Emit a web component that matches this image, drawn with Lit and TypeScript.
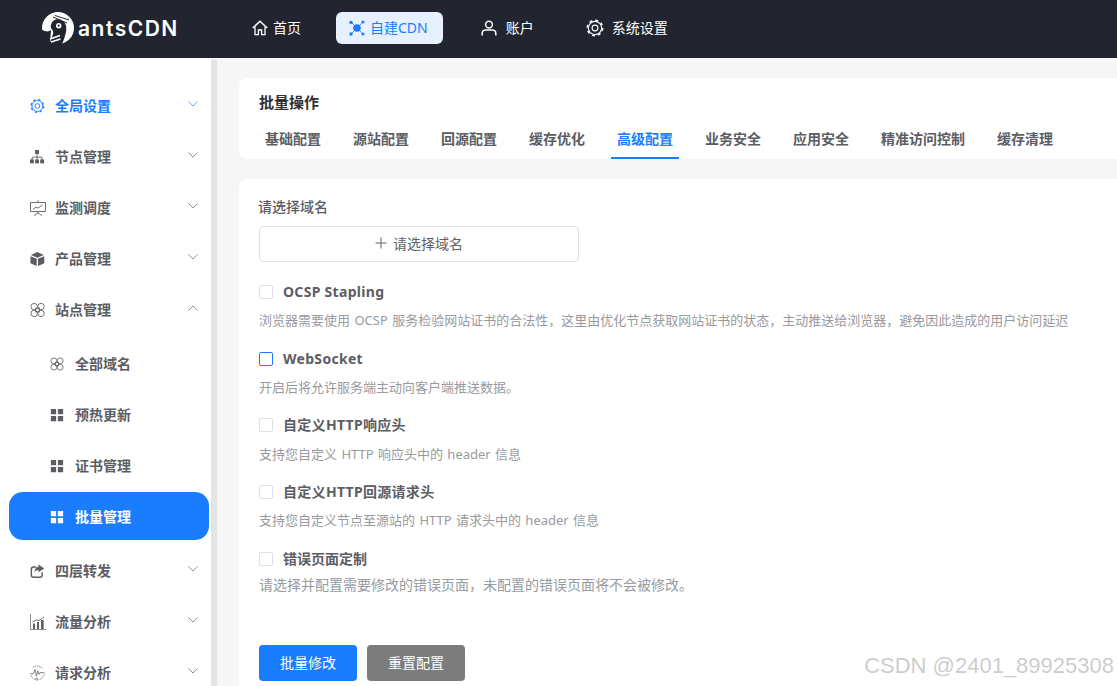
import {LitElement, css, html, svg} from 'lit'
import {customElement} from 'lit/decorators.js'

const ic = (body: unknown, size = 16) => html`<svg width=${size} height=${size} viewBox="0 0 16 16" fill="none" stroke="currentColor" stroke-width="1.2">${body}</svg>`

// shrink a glyph, keeping it against the left of its 16x16 box
const small = (body: unknown, k: number) => svg`<g transform="translate(0 ${8 - 8 * k}) scale(${k})">${body}</g>`

const gear = svg`<circle cx="8" cy="8" r="5.9" stroke-width="1"/><circle cx="8" cy="8" r="6.9" stroke-width="1.3" stroke-dasharray="2.7 2.72"/><circle cx="8" cy="8" r="2.6" stroke-width="1"/>`
const home = svg`<path d="M.8 8 8 1.2 15.2 8" stroke-width="1.5"/><path d="M3 7V14.6H6.4V10H9.6V14.6H13V7" stroke-width="1.3"/>`
const network = svg`<path d="M2.5 2.5 13.5 13.5M13.5 2.5 2.5 13.5" stroke-width=".8"/><circle cx="8" cy="8" r="3.8" fill="currentColor" stroke="none"/><circle cx="2" cy="2.4" r="1.7" fill="currentColor" stroke="none"/><circle cx="14" cy="1.9" r="1.5" fill="currentColor" stroke="none"/><circle cx="2" cy="14" r="1.7" fill="currentColor" stroke="none"/><circle cx="14" cy="14" r="1.5" fill="currentColor" stroke="none"/>`
const user = svg`<circle cx="8" cy="4.6" r="3.4" stroke-width="1.5"/><path d="M1.2 15.5V13.2C1.2 11 2.8 10 5 10H11C13.2 10 14.8 11 14.8 13.2V15.5" stroke-width="1.5"/>`
const tree = svg`<path d="M8 4V8M2.5 12V8.2H13.5V12M8 8V12" stroke-width="1"/><rect x="5.8" y="0" width="4.4" height="4.6" fill="currentColor" stroke="none"/><rect x="0" y="10.8" width="4.4" height="4.4" fill="currentColor" stroke="none"/><rect x="5.8" y="10.8" width="4.4" height="4.4" fill="currentColor" stroke="none"/><rect x="11.6" y="10.8" width="4.4" height="4.4" fill="currentColor" stroke="none"/>`
const board = svg`<path d="M.5 2.5H15.5V11.5H.5ZM8 .2V2.5M8 11.5V13M4 15.5 8 13 12 15.5" stroke-width=".9"/><path d="M3 9.5 6 7 8 8.2 12.5 4.8" stroke-width=".9"/>`
const cube = svg`<path d="M8 .5 15 3.6 8 6.6 1 3.6Z M.5 5 7.3 7.8V15.5L.5 12.6Z M15.5 5 8.7 7.8V15.5L15.5 12.6Z" fill="currentColor" stroke="none"/>`
const clover = svg`<g stroke-width=".9"><circle cx="4.4" cy="4.4" r="3.4"/><circle cx="11.6" cy="4.4" r="3.4"/><circle cx="4.4" cy="11.6" r="3.4"/><circle cx="11.6" cy="11.6" r="3.4"/><rect x="6" y="6" width="4" height="4"/></g>`
const grid = svg`<path d="M1 1H7V7H1ZM9 1H15V7H9ZM1 9H7V15H1ZM9 9H15V15H9Z" fill="currentColor" stroke="none"/>`
const share = svg`<path d="M7 3.5H4C2.6 3.5 1.5 4.5 1.5 6V12.5C1.5 14 2.6 15 4 15H11C12.4 15 13.5 14 13.5 12.5V9.5" stroke-width="1.6"/><path d="M9.5 .8 15.8 5.2 9.5 9.5V7C7.5 7 6 7.8 5 9.8 5 6 6.8 3.6 9.5 3.4Z" fill="currentColor" stroke="none"/>`
const bars = svg`<path d="M.4 0V15.6H16" stroke-width=".8"/><path d="M3 15V9.5H5V15ZM7 15V8H9V15ZM11 15V6H13.6V15Z" fill="currentColor" stroke="none"/><path d="M2.5 8 6 6 9 6.5 14 3" stroke-width=".9"/>`
const wave = svg`<g stroke-width=".8"><path d="M3 2.2A7.4 7.4 0 0 1 14 3.6M15.4 7.5A7.4 7.4 0 0 1 9.5 15.2M5.5 15A7.4 7.4 0 0 1 .6 8" stroke-dasharray="1.6 .8"/><path d="M1.5 8.5H4L5.5 4 7 11.5 8.5 5.5 10 9.5 11 7.5 14.8 7.5"/><circle cx="7.3" cy="14.8" r="1.1"/></g>`

const chevron = (up: boolean) => html`<svg class="chev" width="10" height="6" viewBox="0 0 10 6" fill="none" stroke="currentColor" stroke-width=".9"><path d=${up ? 'M.5 5.5 5 1 9.5 5.5' : 'M.5 .5 5 5 9.5 .5'}/></svg>`

const topItems = [
  {label: '全局设置', icon: small(gear, .92), active: true},
  {label: '节点管理', icon: small(tree, .88)},
  {label: '监测调度', icon: board},
  {label: '产品管理', icon: small(cube, .92)},
]
const subItems = [
  {label: '全部域名', icon: clover},
  {label: '预热更新', icon: grid},
  {label: '证书管理', icon: grid},
  {label: '批量管理', icon: grid, current: true},
]
const bottomItems = [
  {label: '四层转发', icon: small(share, .9)},
  {label: '流量分析', icon: bars},
  {label: '请求分析', icon: small(wave, .92)},
]
const tabs = ['基础配置', '源站配置', '回源配置', '缓存优化', '高级配置', '业务安全', '应用安全', '精准访问控制', '缓存清理']
const options = [
  {name: 'OCSP Stapling', wide: true, desc: '浏览器需要使用 OCSP 服务检验网站证书的合法性，这里由优化节点获取网站证书的状态，主动推送给浏览器，避免因此造成的用户访问延迟'},
  {name: 'WebSocket', wide: true, tight: true, desc: '开启后将允许服务端主动向客户端推送数据。', focus: true},
  {name: '自定义HTTP响应头', wide: true, nudge: true, desc: '支持您自定义 HTTP 响应头中的 header 信息'},
  {name: '自定义HTTP回源请求头', wide: true, desc: '支持您自定义节点至源站的 HTTP 请求头中的 header 信息'},
  {name: '错误页面定制', desc: '请选择并配置需要修改的错误页面，未配置的错误页面将不会被修改。', big: true},
]

@customElement('app-root')
export class AppRoot extends LitElement {
  static styles = css`
    :host {
      display: block;
      height: 686px;
      overflow: hidden;
      position: relative;
      font-family: "Noto Sans", "Noto Sans CJK SC", sans-serif;
      font-size: 14px;
      background: #f6f6f6;
    }
    .txt { padding-bottom: 2px; }

    /* top bar */
    .top {
      height: 58px;
      padding-bottom: 2px;
      box-sizing: border-box;
      background: #22252f;
      display: flex;
      align-items: center;
      color: #fff;
    }
    .logo {
      display: flex;
      align-items: center;
      margin-left: 42px;
      width: 197px;
      gap: 4px;
    }
    .logo span {
      font-family: Inter, sans-serif;
      font-size: 21px;
      font-weight: 600;
      letter-spacing: 1.5px;
    }
    .nav {
      display: flex;
      gap: 22px;
    }
    .nav a {
      display: flex;
      align-items: center;
      height: 32px;
      gap: 5px;
      padding: 0 13px;
      border-radius: 6px;
    }
    .nav a.on {
      background: #e6f0ff;
      color: #1a7cff;
      padding-right: 15px;
    }
    .nav a.acct { padding: 0 16px; gap: 9px; }
    .nav a.sys { padding: 0 14px; gap: 8px; }

    .body {
      display: flex;
      height: 628px;
    }

    /* side menu */
    .side {
      width: 211px;
      flex: none;
      background: #fff;
      padding: 24px 2px 0 9px;
      box-sizing: border-box;
      overflow: hidden;
    }
    .thumb {
      width: 6px;
      flex: none;
      background: #e4e4e6;
      margin-top: 2px;
    }
    .item {
      display: flex;
      align-items: center;
      height: 48px;
      margin-bottom: 3px;
      padding-left: 21px;
      padding-right: 11px;
      border-radius: 14px;
      color: #5c5d63;
      font-weight: 600;
      gap: 9px;
    }
    .item .label { flex: 1; padding-bottom: 2px; }
    .item.on { color: #1a7cff; }
    .item svg { flex: none; }
    .chev {
      color: #7d8593;
      margin-top: -4px;
    }
    .item.on .chev { color: #5b9dff; }
    .subs { padding: 3px 0; }
    .subs .item { padding-left: 41px; gap: 11px; }
    .subs .item.current {
      box-sizing: border-box;
      margin: -1px 0 4px;
      padding-top: 2px;
      background: #1a7cff;
      color: #fff;
    }

    /* content */
    .main {
      flex: 1;
      min-width: 0;
      overflow: hidden;
      padding: 20px 0 0 22px;
    }
    .card {
      width: 1000px;
      background: #fff;
      border-radius: 8px;
      box-sizing: border-box;
    }
    .head {
      height: 81px;
      padding: 14px 20px 0;
      margin-bottom: 20px;
    }
    .head h1 {
      margin: 0;
      font-size: 15px;
      line-height: 20px;
      font-weight: 700;
      color: #303133;
    }
    .tabs {
      display: flex;
      gap: 20px;
      margin-top: 10px;
    }
    .tab {
      padding: 0 6px;
      height: 37px;
      line-height: 34px;
      box-sizing: border-box;
      color: #5c5d63;
      font-weight: 600;
    }
    .tab.on {
      color: #1a7cff;
      border-bottom: 2px solid #1a7cff;
    }
    .form {
      padding: 17px 20px 0;
      height: 600px;
    }
    .form-label {
      line-height: 22px;
      margin-left: -1px;
      color: #5c5d63;
      font-weight: 500;
    }
    .picker {
      width: 320px;
      height: 36px;
      margin-top: 8px;
      padding-bottom: 2px;
      border: 1px solid #dcdfe6;
      border-radius: 4px;
      box-sizing: border-box;
      display: flex;
      align-items: center;
      justify-content: center;
      gap: 6px;
      color: #606266;
    }
    .opts {
      margin-top: 19px;
      display: flex;
      flex-direction: column;
      gap: 18px;
    }
    .opt.tight { margin-bottom: -1px; }
    .opt-row {
      display: flex;
      align-items: center;
      gap: 10px;
      height: 22px;
      color: #5c5d63;
      font-weight: 700;
    }
    .opt-row .wide { letter-spacing: .3px; }
    .box {
      width: 14px;
      height: 14px;
      box-sizing: border-box;
      border: 1px solid #dcdfe6;
      border-radius: 2px;
    }
    .box.focus { border-color: #1a7cff; }
    .desc {
      margin-top: 7px;
      font-size: 13px;
      line-height: 20px;
      word-spacing: 1px;
      color: #999a9e;
    }
    .desc.nudge { margin: 8px 0 -1px; }
    .desc.big {
      font-size: 14px;
      margin-top: 5px;
    }
    .actions {
      display: flex;
      gap: 10px;
      margin-top: 50px;
    }
    .btn {
      width: 98px;
      height: 36px;
      padding-bottom: 2px;
      box-sizing: border-box;
      border-radius: 4px;
      color: #fff;
      display: flex;
      align-items: center;
      justify-content: center;
      background: #1a7cff;
    }
    .btn.grey { background: #7c7c7c; }

    .mark {
      position: absolute;
      right: 3px;
      top: 653px;
      font-family: "Liberation Sans", sans-serif;
      font-size: 22px;
      line-height: 26px;
      color: rgba(140, 140, 140, .45);
      text-shadow: 1px 1px 1px rgba(255, 255, 255, .6);
    }
  `

  renderItem(it: any, chev: boolean | null) {
    return html`
      <div class="item ${it.active ? 'on' : ''} ${it.current ? 'current' : ''}">
        ${ic(it.icon, chev === null ? 14 : 16)}
        <span class="label">${it.label}</span>
        ${chev === null ? '' : chevron(chev)}
      </div>
    `
  }

  render() {
    return html`
      <div class="top">
        <div class="logo">
          <svg width="32" height="32" viewBox="0 0 32 32">
            <circle cx="16" cy="16" r="16" fill="#fff"/>
            <path d="M-1 17C3 20 7 20 9 18L8 33H-1Z" fill="#22252f"/>
            <path d="M9 13C10 8 15 6 19 8 24 10 25 15 24 20 23 24 22 28 20 32H8C9 26 12 22 11 19 10 17 8 16 9 13Z" fill="#22252f"/>
            <circle cx="16.7" cy="13.7" r="2.7" fill="#fff"/>
            <circle cx="16.7" cy="13.7" r="1.1" fill="#22252f"/>
            <path d="M8 27 18 23.5M9 30 18.5 27" stroke="#fff" stroke-width="1.6"/>
            <path d="M13 3.5 27 8M11 5 25 11" stroke="#22252f" stroke-width="1"/>
          </svg>
          <span>antsCDN</span>
        </div>
        <div class="nav">
          <a>${ic(home)}<span class="txt">首页</span></a>
          <a class="on">${ic(network)}<span class="txt">自建CDN</span></a>
          <a class="acct">${ic(user)}<span class="txt">账户</span></a>
          <a class="sys">${ic(gear, 18)}<span class="txt">系统设置</span></a>
        </div>
      </div>
      <div class="body">
        <div class="side">
          ${topItems.map(it => this.renderItem(it, false))}
          ${this.renderItem({label: '站点管理', icon: small(clover, .95)}, true)}
          <div class="subs">
            ${subItems.map(it => this.renderItem(it, null))}
          </div>
          ${bottomItems.map(it => this.renderItem(it, false))}
        </div>
        <div class="thumb"></div>
        <div class="main">
          <div class="card head">
            <h1>批量操作</h1>
            <div class="tabs">
              ${tabs.map(t => html`<div class="tab ${t === '高级配置' ? 'on' : ''}">${t}</div>`)}
            </div>
          </div>
          <div class="card form">
            <div class="form-label">请选择域名</div>
            <div class="picker">
              <svg width="12" height="12" viewBox="0 0 12 12" stroke="#606266" stroke-width="1"><path d="M6 .5V11.5M.5 6H11.5"/></svg>
              请选择域名
            </div>
            <div class="opts">
              ${options.map(o => html`
                <div class="opt ${o.tight ? 'tight' : ''}">
                  <div class="opt-row"><span class="box ${o.focus ? 'focus' : ''}"></span><span class="txt ${o.wide ? 'wide' : ''}">${o.name}</span></div>
                  <div class="desc ${o.big ? 'big' : ''} ${o.nudge ? 'nudge' : ''}">${o.desc}</div>
                </div>
              `)}
            </div>
            <div class="actions">
              <div class="btn">批量修改</div>
              <div class="btn grey">重置配置</div>
            </div>
          </div>
        </div>
      </div>
      <div class="mark">CSDN @2401_89925308</div>
    `
  }
}
